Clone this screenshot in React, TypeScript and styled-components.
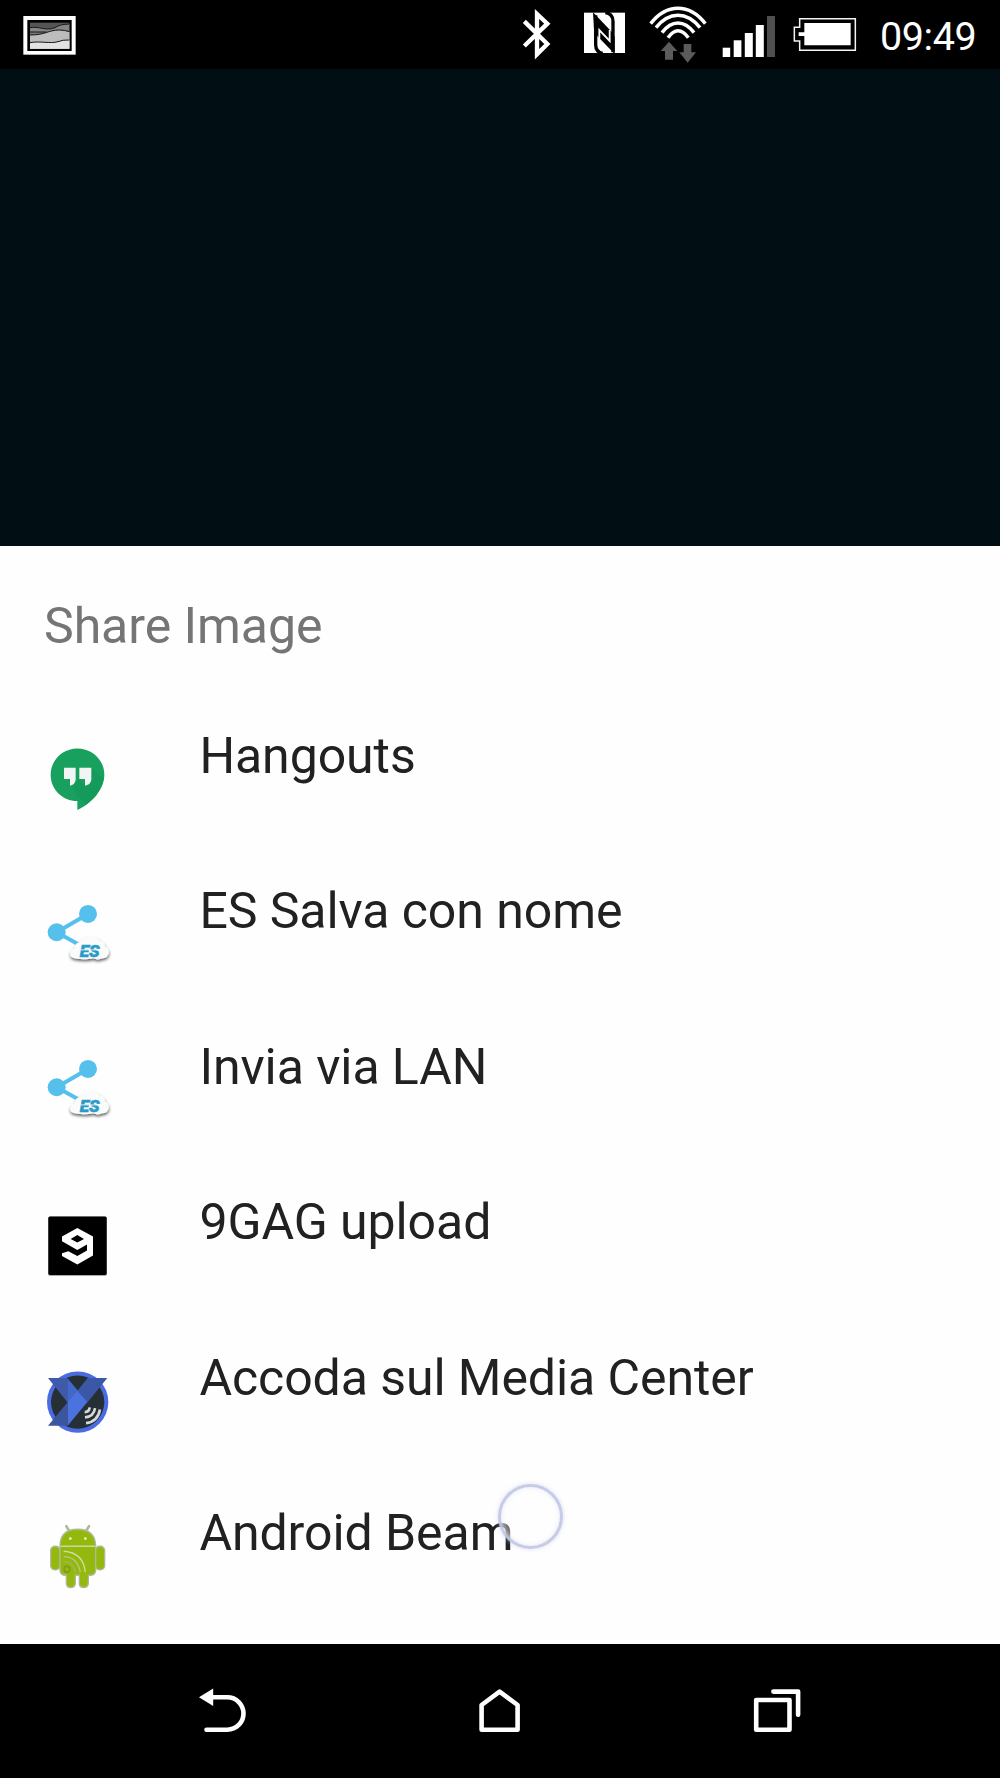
import React from "react";
import styled, { createGlobalStyle } from "styled-components";

const GlobalStyle = createGlobalStyle`
  * { box-sizing: border-box; }
  html, body { margin: 0; padding: 0; background: #000; }
  body { font-family: Roboto, "Noto Sans", sans-serif; }
  svg { display: block; flex: none; }
`;

const Screen = styled.div`
  position: relative;
  display: flex;
  flex-direction: column;
  width: 1000px;
  height: 1778px;
  overflow: hidden;
  background: #000;
`;

const StatusBar = styled.header`
  display: flex;
  align-items: center;
  flex: none;
  height: 69px;
  padding: 0 24px 0 20px;
  background: #000;
`;

const StatusItem = styled.div<{ $gap?: number; $push?: boolean }>`
  margin-left: ${(p) => (p.$push ? "auto" : `${p.$gap ?? 0}px`)};
`;

const Clock = styled.time`
  margin-left: 23px;
  width: 96px;
  font-size: 39.5px;
  line-height: 69px;
  padding-top: 3px;
  letter-spacing: -0.4px;
  white-space: nowrap;
  color: #fff;
`;

const Backdrop = styled.div`
  flex: none;
  height: 476.5px;
  background: #010e13;
`;

const Sheet = styled.main`
  flex: none;
  height: 1098.5px;
  background: #fefefe;
`;

const Title = styled.h1`
  margin: 0;
  height: 156px;
  padding: 50px 0 0 44px;
  font-size: 50px;
  line-height: 60px;
  font-weight: 400;
  letter-spacing: -0.06px;
  color: #757575;
`;

const List = styled.ul`
  margin: 0;
  padding: 0;
  list-style: none;
`;

const Row = styled.li`
  display: flex;
  align-items: center;
  height: 155.6px;
  padding-left: 42px;
`;

const Label = styled.span`
  align-self: flex-start;
  margin-left: 87.4px;
  padding-top: 24px;
  font-size: 50px;
  line-height: 60px;
  letter-spacing: -0.07px;
  white-space: nowrap;
  color: #212121;
`;

const NavBar = styled.nav`
  display: flex;
  flex: 1;
  gap: 221px;
  padding: 36px 0 0 195px;
  background: #000;
`;

const TouchRing = styled.div`
  position: absolute;
  left: 498px;
  top: 1484px;
  width: 65px;
  height: 65px;
  border: 3px solid rgba(188, 194, 226, 0.85);
  border-radius: 50%;
  background: radial-gradient(circle, rgba(255, 255, 255, 0.05) 40%, rgba(255, 255, 255, 0.55) 72%);
  box-shadow: 0 0 4px rgba(190, 198, 240, 0.6), inset 0 0 4px rgba(205, 210, 240, 0.6);
`;

const PictureIcon = () => (
  <svg width="60" height="69" viewBox="60 0 180 207">
    <rect x="70" y="48" width="157" height="116" fill="#fff" />
    <rect x="82" y="60" width="133" height="93" fill="#000" />
    <rect x="90" y="68" width="118" height="78" fill="#555" />
    <path d="M90 83C120 78 135 94 165 83C184 72 192 74 208 72V146H90Z" fill="#858585" />
    <path d="M90 96H147L178 89L208 95V146H90Z" fill="#777" />
    <path d="M90 105C138 105 144 90 178 90Q193 90 208 95V146H90Z" fill="#bcbcbc" />
    <path d="M90 128C120 122 150 132 174 125Q188 119 208 120V146H90Z" fill="#e2e2e2" />
    <g fill="none" stroke="#161616" strokeWidth="3">
      <path d="M90 83C120 78 135 94 165 83C184 72 192 74 208 72" />
      <path d="M90 96H140" />
      <path d="M90 105C138 105 144 90 178 90Q193 90 208 95" />
      <path d="M90 128C120 122 150 132 174 125Q188 119 208 120" />
    </g>
  </svg>
);

const BluetoothIcon = () => (
  <svg width="34" height="69" viewBox="60 0 102 207">
    <path d="M73 64L142 132L111 163V42L142 71L73 138" fill="none" stroke="#fff" strokeWidth="13" />
  </svg>
);

const NfcIcon = () => (
  <svg width="45" height="69" viewBox="246 0 135 207">
    <rect x="252" y="38" width="123" height="121" fill="#fff" />
    <g fill="none" stroke="#000" strokeWidth="10">
      <path d="M287 46V134Q287 156 308 160" />
      <path d="M316 38Q339 41 339 64V157" />
    </g>
    <path d="M279 37L335 95L344 110V162L292 108L282 90Z" fill="#000" />
    <path d="M298 116V90L329 123V90" fill="none" stroke="#fff" strokeWidth="5.5" />
  </svg>
);

const WifiIcon = () => (
  <svg width="62" height="69" viewBox="441 0 186 207">
    <g fill="none" stroke="#fff" strokeWidth="10.5">
      <path d="M452 71Q488 25 534 25Q580 25 616 71" />
      <path d="M468 83Q498 46 534 46Q570 46 600 83" />
      <path d="M486 98Q508 69 534 69Q560 69 582 98" />
      <path d="M504 113Q519 92 534 92Q550 92 565 113" />
    </g>
    <path d="M507 125L532 153H519V179H495V153H482Z" fill="#5b5b5b" />
    <path d="M551 132H574V157H588L563 188L538 157H551Z" fill="#5b5b5b" />
  </svg>
);

const SignalIcon = () => (
  <svg width="58" height="69" viewBox="0 0 58 69">
    <g fill="#fff">
      <rect x="2.7" y="47.7" width="7.5" height="9.3" />
      <rect x="13.7" y="40.3" width="7.7" height="16.7" />
      <rect x="24.8" y="33" width="8" height="24" />
      <rect x="35.8" y="25" width="8" height="32" />
    </g>
    <rect x="47" y="16" width="8" height="41" fill="#4f4f4f" />
  </svg>
);

const BatteryIcon = () => (
  <svg width="64" height="69" viewBox="159 0 192 207">
    <path d="M179 56H346V151H179V123H163V82H179Z" fill="none" stroke="#f4f4f4" strokeWidth="4.5" />
    <path d="M193 69H332V136H193V108H176V97H193Z" fill="#fff" />
  </svg>
);

const HangoutsIcon = () => (
  <svg width="70" height="70" viewBox="36 642.75 210 210">
    <path d="M142 656C187 656 223 691 223 735C223 780 184 822 142 841V814C97 814 62 779 62 735C62 691 98 656 142 656Z" fill="#18a05f" />
    <path d="M184 714L222 748C215 780 194 807 170 824L142 800L125 767L148 748L160 765Z" fill="#0d9153" opacity=".3" />
    <path d="M102 714H137V751Q134 766 120 768V748H102ZM148 714H184V751Q181 766 165 768V748H148Z" fill="#f1f5f3" />
  </svg>
);

const EsShareIcon = () => (
  <svg width="70" height="70" viewBox="36 29.25 210 210">
    <defs>
      <filter id="cloudShade" x="-20%" y="-20%" width="140%" height="150%">
        <feDropShadow dx="1" dy="6" stdDeviation="4" floodColor="#000" floodOpacity=".6" />
      </filter>
    </defs>
    <path d="M174 71L80 126L145 162" fill="none" stroke="#55c0ec" strokeWidth="12" />
    <circle cx="174" cy="71" r="27" fill="#55c0ec" />
    <circle cx="80" cy="126" r="27" fill="#55c0ec" />
    <path
      d="M138 205Q121 204 120 190Q121 178 134 174Q134 157 150 155Q160 139 181 139Q203 137 211 153Q224 155 225 169Q238 176 236 189Q233 204 217 204Q203 211 190 204Q166 210 138 205Z"
      fill="#fafcfc"
      filter="url(#cloudShade)"
    />
    <text x="149" y="200" fontFamily="Roboto, sans-serif" fontWeight="900" fontStyle="italic" fontSize="51" textLength="60" lengthAdjust="spacingAndGlyphs" fill="#299bc8" stroke="#299bc8" strokeWidth="1.5">
      ES
    </text>
    <path d="M152 179H209" stroke="#fafcfc" strokeWidth="2.5" />
  </svg>
);

const NineGagIcon = () => (
  <svg width="70" height="70" viewBox="36 32.25 210 210">
    <rect x="54" y="49" width="177" height="178" rx="6" fill="#aaa" />
    <rect x="55" y="49" width="175" height="175" rx="5" fill="#000" />
    <path
      fillRule="evenodd"
      d="M142 83L189 109V166L142 193L96 167V159L115 153L142 167L171 151V133L142 149L96 123V109ZM142 104L122 116L142 127L162 116Z"
      fill="#fff"
    />
  </svg>
);

const MediaCenterIcon = () => (
  <svg width="70" height="70" viewBox="36 48.75 210 210">
    <circle cx="143" cy="154" r="92" fill="#4a6be2" />
    <circle cx="143" cy="154" r="80" fill="#252f35" />
    <path d="M54 82H113V155Z" fill="#3e5aa8" />
    <path d="M54 225L113 154V225Z" fill="#3c559f" />
    <path d="M173 82H232L172 155L143 119Z" fill="#3b58a6" />
    <path d="M113 84L172 154L113 225Z" fill="#4c72e0" />
    <path d="M113 84L142 119L113 155Z" fill="#4367c8" />
    <g fill="none" stroke="#d5d9d9" strokeWidth="8">
      <path d="M164 184Q178 184 179 170" />
      <path d="M165 200Q192 197 195 172" />
      <path d="M168 217Q203 213 210 176" />
    </g>
  </svg>
);

const BeamIcon = () => (
  <svg width="70" height="70" viewBox="36 35.25 210 210">
    <g fill="#94b90c" stroke="#b0b89e" strokeWidth="4">
      <path d="M119 64L109 48M167 64L177 48" fill="none" strokeWidth="8" strokeLinecap="round" />
      <rect x="62" y="108" width="28" height="71" rx="13" />
      <rect x="196" y="108" width="28" height="71" rx="13" />
      <path d="M109 184H136V221Q134 232 122 232Q110 232 109 221ZM148 184H175V221Q173 232 161 232Q149 232 148 221Z" />
      <path d="M90 105Q92 57 143 57Q194 57 197 105V181Q195 195 181 195H106Q92 195 90 181Z" />
    </g>
    <path d="M111 190H134V207H111ZM150 190H173V207H150Z" fill="#94b90c" />
    <path d="M91 108H196" stroke="#cbd7a0" strokeWidth="4" />
    <g fill="#eef4d7">
      <circle cx="121" cy="85" r="4" />
      <circle cx="166" cy="85" r="4" />
    </g>
    <g fill="none" strokeWidth="4">
      <circle cx="111" cy="177" r="9" stroke="#7e9a1c" />
      <path d="M101 154Q129 153 136 186" stroke="#a3b560" />
      <path d="M101 139Q143 140 151 186" stroke="#b9c68c" />
      <path d="M101 123Q160 127 166 186" stroke="#d0dba9" />
    </g>
  </svg>
);

const BackIcon = () => (
  <svg width="56" height="60" viewBox="195 1680 56 60">
    <path d="M199 1697.3L213.2 1688.6V1706Z" fill="#fff" />
    <path d="M212 1697.3H227.3A16.2 16.2 0 0 1 227.3 1729.7H206.5" fill="none" stroke="#fff" strokeWidth="4.6" strokeLinecap="round" />
  </svg>
);

const HomeIcon = () => (
  <svg width="56" height="60" viewBox="472 1680 56 60">
    <path d="M481.6 1729.7V1705L499.6 1691.7L517.6 1705V1729.7Z" fill="none" stroke="#fff" strokeWidth="4.6" strokeLinejoin="round" />
  </svg>
);

const RecentsIcon = () => (
  <svg width="56" height="60" viewBox="749 1680 56 60">
    <path d="M756.2 1700H789.5V1729.7H756.2Z" fill="none" stroke="#fff" strokeWidth="4.6" strokeLinejoin="round" />
    <path d="M773.4 1691.6H798.1V1714.7" fill="none" stroke="#fff" strokeWidth="4.6" strokeLinejoin="round" strokeLinecap="round" />
  </svg>
);

const targets = [
  { label: "Hangouts", Icon: HangoutsIcon },
  { label: "ES Salva con nome", Icon: EsShareIcon },
  { label: "Invia via LAN", Icon: EsShareIcon },
  { label: "9GAG upload", Icon: NineGagIcon },
  { label: "Accoda sul Media Center", Icon: MediaCenterIcon },
  { label: "Android Beam", Icon: BeamIcon },
];

export default function App() {
  return (
    <>
      <GlobalStyle />
      <Screen>
        <StatusBar>
          <StatusItem><PictureIcon /></StatusItem>
          <StatusItem $push><BluetoothIcon /></StatusItem>
          <StatusItem $gap={28}><NfcIcon /></StatusItem>
          <StatusItem $gap={20}><WifiIcon /></StatusItem>
          <StatusItem $gap={11}><SignalIcon /></StatusItem>
          <StatusItem $gap={15}><BatteryIcon /></StatusItem>
          <Clock>09:49</Clock>
        </StatusBar>
        <Backdrop />
        <Sheet>
          <Title>Share Image</Title>
          <List>
            {targets.map(({ label, Icon }) => (
              <Row key={label}>
                <Icon />
                <Label>{label}</Label>
              </Row>
            ))}
          </List>
        </Sheet>
        <NavBar>
          <BackIcon />
          <HomeIcon />
          <RecentsIcon />
        </NavBar>
        <TouchRing />
      </Screen>
    </>
  );
}
